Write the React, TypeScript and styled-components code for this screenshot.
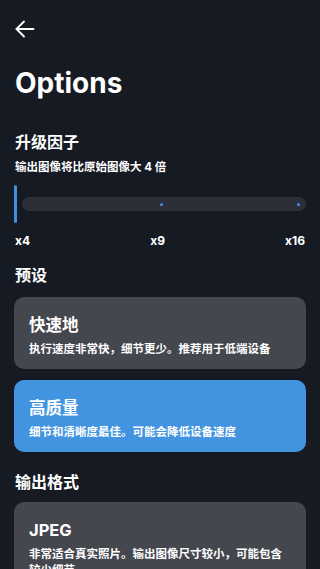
import styled, { createGlobalStyle } from "styled-components";

const GlobalStyle = createGlobalStyle`
    html, body {
        margin: 0;
        padding: 0;
        background: #161a23;
    }
    body {
        font-family: Inter, "Noto Sans CJK SC", sans-serif;
        color: #ffffff;
    }
`;

const Page = styled.div`
    height: 569px;
    overflow: hidden;
    background: #161a23;
    padding: 0 14px;
    box-sizing: border-box;
`;

const TopBar = styled.div`
    height: 57px;
    display: flex;
    align-items: center;
`;

const BackButton = styled.button`
    background: none;
    border: none;
    padding: 0;
    margin-left: -1.5px;
    width: 24px;
    height: 24px;
    display: flex;
    align-items: center;
    justify-content: center;
    color: #ffffff;
`;

const Title = styled.h1`
    margin: 8px 0 0 1px;
    font-size: 28px;
    line-height: 36px;
    font-weight: 700;
`;

const SectionTitle = styled.h2<{ $top: number }>`
    margin: ${(p) => p.$top}px 0 0 1px;
    font-size: 16px;
    line-height: 22px;
    font-weight: 700;
`;

const Hint = styled.p`
    margin: 6px 0 0 1px;
    font-size: 11.5px;
    line-height: 16px;
    font-weight: 700;
`;

const Slider = styled.div`
    margin-top: 10px;
    height: 38px;
    display: flex;
    align-items: center;
    gap: 5px;
`;

const Thumb = styled.div`
    width: 3px;
    height: 38px;
    border-radius: 2px;
    background: #3f8fe0;
`;

const Track = styled.div`
    flex: 1;
    height: 14px;
    border-radius: 7px;
    background: #2d2f38;
    display: flex;
    align-items: center;
    justify-content: flex-end;
    padding-right: 6px;
    gap: 134px;
`;

const Dot = styled.span`
    width: 3px;
    height: 3px;
    border-radius: 50%;
    background: #3f8fe0;
`;

const Ticks = styled.div`
    margin-top: 10px;
    display: flex;
    justify-content: space-between;
    font-size: 12px;
    line-height: 16px;
    font-weight: 700;
    padding: 0 1px;
`;

const Card = styled.div<{ $active?: boolean; $top: number }>`
    margin-top: ${(p) => p.$top}px;
    border-radius: 10px;
    background: ${(p) => (p.$active ? "#4294e0" : "#45474f")};
    padding: 17px 15px 12px;
`;

const CardTitle = styled.div`
    font-size: 16.5px;
    line-height: 22px;
    font-weight: 700;
`;

const CardText = styled.div`
    margin-top: 5px;
    font-size: 11.5px;
    line-height: 16px;
    font-weight: 700;
`;

const BackIcon = () => (
    <svg width="24" height="24" viewBox="0 0 24 24" fill="none" stroke="currentColor" strokeWidth="1.8" strokeLinecap="round" strokeLinejoin="round">
        <path d="M20.5 12H3.5" />
        <path d="M11 4.5L3.5 12l7.5 7.5" />
    </svg>
);

export default function App() {
    return (
        <>
            <GlobalStyle />
            <Page>
                <TopBar>
                    <BackButton>
                        <BackIcon />
                    </BackButton>
                </TopBar>
                <Title>Options</Title>
                <SectionTitle $top={30}>升级因子</SectionTitle>
                <Hint>输出图像将比原始图像大 4 倍</Hint>
                <Slider>
                    <Thumb />
                    <Track>
                        <Dot />
                        <Dot />
                    </Track>
                </Slider>
                <Ticks>
                    <span>x4</span>
                    <span>x9</span>
                    <span>x16</span>
                </Ticks>
                <SectionTitle $top={15}>预设</SectionTitle>
                <Card $top={11}>
                    <CardTitle>快速地</CardTitle>
                    <CardText>执行速度非常快，细节更少。推荐用于低端设备</CardText>
                </Card>
                <Card $active $top={11}>
                    <CardTitle>高质量</CardTitle>
                    <CardText>细节和清晰度最佳。可能会降低设备速度</CardText>
                </Card>
                <SectionTitle $top={19}>输出格式</SectionTitle>
                <Card $top={9}>
                    <CardTitle>JPEG</CardTitle>
                    <CardText>非常适合真实照片。输出图像尺寸较小，可能包含较少细节</CardText>
                </Card>
            </Page>
        </>
    );
}
